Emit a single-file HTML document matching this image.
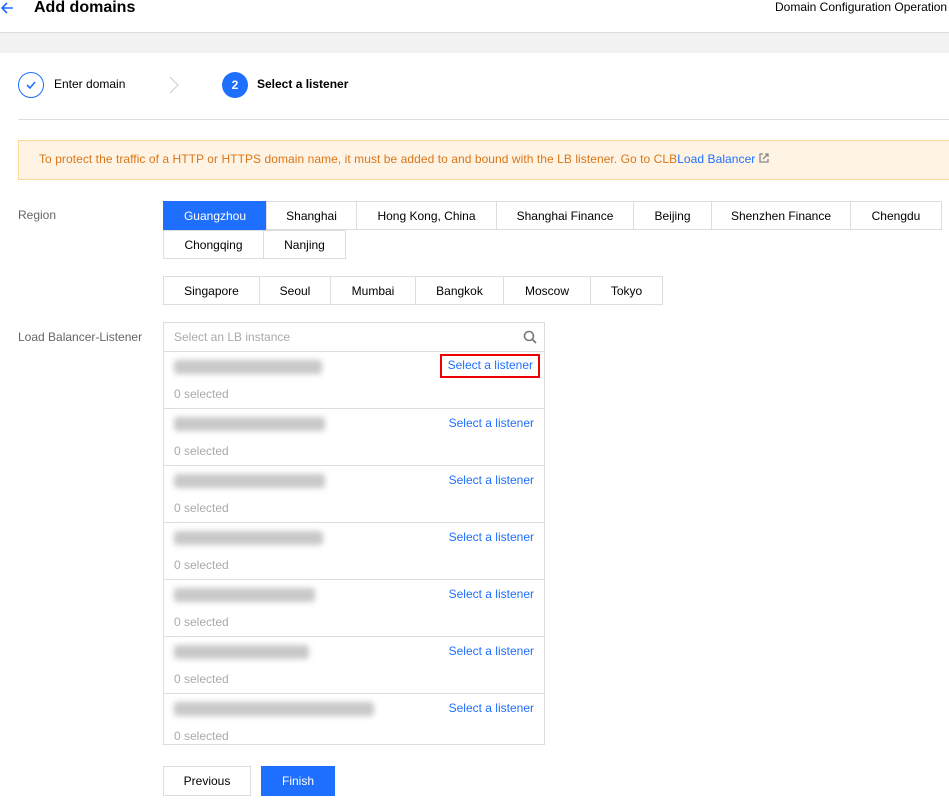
<!DOCTYPE html>
<html><head><style>
*{box-sizing:border-box;margin:0;padding:0}
body{width:949px;height:802px;overflow:hidden;background:#fff;font-family:"Liberation Sans",Arial,sans-serif;font-size:12px;color:#000;position:relative}
.a{position:absolute}
.rb{position:absolute;height:29px;border:1px solid #ddd;display:flex;align-items:center;justify-content:center;font-size:12px;color:#000;background:#fff}
.sel{background:#1f6fff;color:#fff;border-color:#1f6fff}
.row{position:absolute;left:0;width:381px;border-top:1px solid #ddd}
.blur{position:absolute;left:10px;top:8px;height:14px;background:#c8c8c8;filter:blur(3px);border-radius:3px}
.lnk{position:absolute;right:11px;top:7px;color:#1f6fff;font-size:12px}
.cnt{position:absolute;left:10px;top:35px;color:#aaa;font-size:12px}
</style></head><body>
<svg class="a" style="left:0;top:1px" width="14" height="14" viewBox="0 0 14 14"><path d="M13 7H2M7 2L2 7l5 5" stroke="#1f6fff" stroke-width="1.6" fill="none"/></svg>
<div class="a" style="left:34px;top:-1px;font-size:16px;font-weight:bold">Add domains</div>
<div class="a" style="left:775px;top:0;font-size:12px;white-space:nowrap">Domain Configuration Operation</div>
<div class="a" style="left:0;top:32px;width:949px;height:21px;background:#f2f2f2;border-top:1px solid #ddd"></div>
<div class="a" style="left:18px;top:72px;width:26px;height:26px;border:1px solid #1f6fff;border-radius:50%"></div>
<svg class="a" style="left:24px;top:78px" width="14" height="14" viewBox="0 0 14 14"><path d="M3 7l3 3 5-6" stroke="#1f6fff" stroke-width="1.6" fill="none"/></svg>
<div class="a" style="left:54px;top:77px;font-size:12px">Enter domain</div>
<svg class="a" style="left:168px;top:76px" width="12" height="18" viewBox="0 0 12 18"><path d="M2 1l8 8-8 8" stroke="#ccc" stroke-width="1" fill="none"/></svg>
<div class="a" style="left:222px;top:72px;width:26px;height:26px;background:#1f6fff;border-radius:50%;color:#fff;font-weight:bold;text-align:center;line-height:26px">2</div>
<div class="a" style="left:257px;top:77px;font-weight:bold">Select a listener</div>
<div class="a" style="left:18px;top:119px;width:931px;border-top:1px solid #ddd"></div>
<div class="a" style="left:18px;top:140px;width:940px;height:40px;background:#fff4e3;border:1px solid #ffd8a0"></div>
<div class="a" style="left:39px;top:152px;color:#d9761a;white-space:nowrap;letter-spacing:0.06px">To protect the traffic of a HTTP or HTTPS domain name, it must be added to and bound with the LB listener. Go to CLB<span style="color:#1f6fff">Load Balancer</span> <svg width="10" height="10" viewBox="0 0 10 10"><path d="M4 1H1v8h8V6M6 1h3v3M9 1L4 6" stroke="#888" stroke-width="1.3" fill="none"/></svg></div>
<div class="a" style="left:18px;top:208px;color:#666">Region</div>
<div class="rb sel" style="left:163px;top:201px;width:104px">Guangzhou</div>
<div class="rb" style="left:266px;top:201px;width:91px">Shanghai</div>
<div class="rb" style="left:356px;top:201px;width:141px">Hong Kong, China</div>
<div class="rb" style="left:496px;top:201px;width:138px">Shanghai Finance</div>
<div class="rb" style="left:633px;top:201px;width:79px">Beijing</div>
<div class="rb" style="left:711px;top:201px;width:140px">Shenzhen Finance</div>
<div class="rb" style="left:850px;top:201px;width:92px">Chengdu</div>
<div class="rb" style="left:163px;top:230px;width:101px">Chongqing</div>
<div class="rb" style="left:263px;top:230px;width:83px">Nanjing</div>
<div class="rb" style="left:163px;top:276px;width:97px">Singapore</div>
<div class="rb" style="left:259px;top:276px;width:72px">Seoul</div>
<div class="rb" style="left:330px;top:276px;width:86px">Mumbai</div>
<div class="rb" style="left:415px;top:276px;width:89px">Bangkok</div>
<div class="rb" style="left:503px;top:276px;width:88px">Moscow</div>
<div class="rb" style="left:590px;top:276px;width:73px">Tokyo</div>
<div class="a" style="left:18px;top:330px;color:#666">Load Balancer-Listener</div>
<div class="a" style="left:163px;top:322px;width:382px;height:423px;border:1px solid #ddd">
<div class="a" style="left:10px;top:7px;color:#aaa">Select an LB instance</div>
<svg class="a" style="left:359px;top:7px" width="14" height="14" viewBox="0 0 14 14"><circle cx="6" cy="6" r="4.5" stroke="#777" stroke-width="1.6" fill="none"/><path d="M9.3 9.3L13 13" stroke="#777" stroke-width="1.8"/></svg>
<div class="row" style="top:28px;height:57px"><div class="blur" style="width:148px"></div><div class="lnk" style="right:5px;top:2px;border:2px solid #e00;padding:2px 5px 4px 6px">Select a listener</div><div class="cnt">0 selected</div></div>
<div class="row" style="top:85px;height:57px"><div class="blur" style="width:151px"></div><div class="lnk">Select a listener</div><div class="cnt">0 selected</div></div>
<div class="row" style="top:142px;height:57px"><div class="blur" style="width:151px"></div><div class="lnk">Select a listener</div><div class="cnt">0 selected</div></div>
<div class="row" style="top:199px;height:57px"><div class="blur" style="width:149px"></div><div class="lnk">Select a listener</div><div class="cnt">0 selected</div></div>
<div class="row" style="top:256px;height:57px"><div class="blur" style="width:141px"></div><div class="lnk">Select a listener</div><div class="cnt">0 selected</div></div>
<div class="row" style="top:313px;height:57px"><div class="blur" style="width:135px"></div><div class="lnk">Select a listener</div><div class="cnt">0 selected</div></div>
<div class="row" style="top:370px;height:52px"><div class="blur" style="width:200px"></div><div class="lnk">Select a listener</div><div class="cnt">0 selected</div></div>
</div>
<div class="rb" style="left:163px;top:766px;width:88px;height:30px">Previous</div>
<div class="rb sel" style="left:261px;top:766px;width:74px;height:30px">Finish</div>
</body></html>
